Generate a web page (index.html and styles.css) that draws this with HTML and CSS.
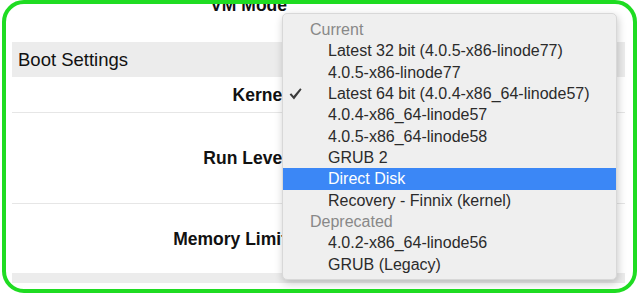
FILE: index.html
```html
<!DOCTYPE html>
<html>
<head>
    <title>Boot Settings</title>
    <link rel="stylesheet" href="styles.css">
</head>
<body>

<div class="frame">
    <div class="settings">
        <div class="row row-vm">
            <div class="label">VM Mode</div>
        </div>

        <div class="section">Boot Settings</div>

        <div class="row row-kernel">
            <div class="label">Kernel</div>
        </div>
        <div class="row row-runlevel">
            <div class="label">Run Level</div>
        </div>
        <div class="row row-memory">
            <div class="label">Memory Limit</div>
        </div>

        <div class="section section-next"></div>
    </div>

    <!-- Kernel dropdown (open) -->
    <div class="menu">
        <div class="menu-group">Current</div>
        <div class="menu-item">Latest 32 bit (4.0.5-x86-linode77)</div>
        <div class="menu-item">4.0.5-x86-linode77</div>
        <div class="menu-item checked">
            <svg class="check" width="13" height="12" viewBox="0 0 13 12">
                <path d="M0.6 6.6 L2.2 5.3 L4.6 8.1 L11.2 0.3 L12.6 1.4 L5 11.4 Z" fill="#3c3c3c"/>
            </svg>
            Latest 64 bit (4.0.4-x86_64-linode57)
        </div>
        <div class="menu-item">4.0.4-x86_64-linode57</div>
        <div class="menu-item">4.0.5-x86_64-linode58</div>
        <div class="menu-item">GRUB 2</div>
        <div class="menu-item active">Direct Disk</div>
        <div class="menu-item">Recovery - Finnix (kernel)</div>
        <div class="menu-group">Deprecated</div>
        <div class="menu-item">4.0.2-x86_64-linode56</div>
        <div class="menu-item">GRUB (Legacy)</div>
    </div>
</div>

</body>
</html>
```

FILE: styles.css
```css
body {
    margin: 0;
    background-color: #ffffff;
    font-family: "Liberation Sans", Arial, sans-serif;
    color: #111111;
}

.frame {
    position: relative;
    box-sizing: border-box;
    width: 635px;
    height: 293px;
    margin-left: 2px;
    border: 4px solid #1fdc22;
    border-radius: 22px;
    padding: 0 8px 0 6px;
    overflow: hidden;
    background-color: #ffffff;
}

.settings {
    margin-top: -4px;
}

.row {
    display: flex;
    align-items: center;
    border-bottom: 1px solid #e6e6e6;
}

.label {
    width: 275px;
    text-align: right;
    font-weight: bold;
    font-size: 17.5px;
    line-height: 20px;
    color: #111111;
}

.row-vm {
    height: 42px;
    align-items: flex-start;
    border-bottom: none;
}

.row-vm .label {
    margin-top: -5px;
}

.row-kernel {
    height: 35px;
}

.row-runlevel {
    height: 90px;
}

.row-memory {
    height: 69px;
    border-bottom: none;
}

.section {
    height: 35px;
    line-height: 35px;
    background-color: #ececec;
    font-size: 18.5px;
    padding-left: 6px;
    color: #111111;
}

.section-next {
    height: 10px;
}

.menu {
    position: absolute;
    left: 276px;
    top: 9px;
    width: 335px;
    height: 267px;
    box-sizing: border-box;
    padding-top: 5px;
    background-color: #efefef;
    border: 1px solid #d8d8d8;
    border-radius: 5px;
    box-shadow: 1px 3px 8px rgba(0, 0, 0, 0.22);
    font-size: 16px;
}

.menu-group,
.menu-item {
    position: relative;
    height: 21.33px;
    line-height: 21.33px;
    white-space: nowrap;
}

.menu-group {
    padding-left: 27px;
    color: #888888;
}

.menu-item {
    padding-left: 45px;
    color: #2b2b2b;
}

.menu-item.active {
    background-color: #3b87f6;
    color: #ffffff;
}

.check {
    position: absolute;
    left: 6px;
    top: 5px;
}
```
